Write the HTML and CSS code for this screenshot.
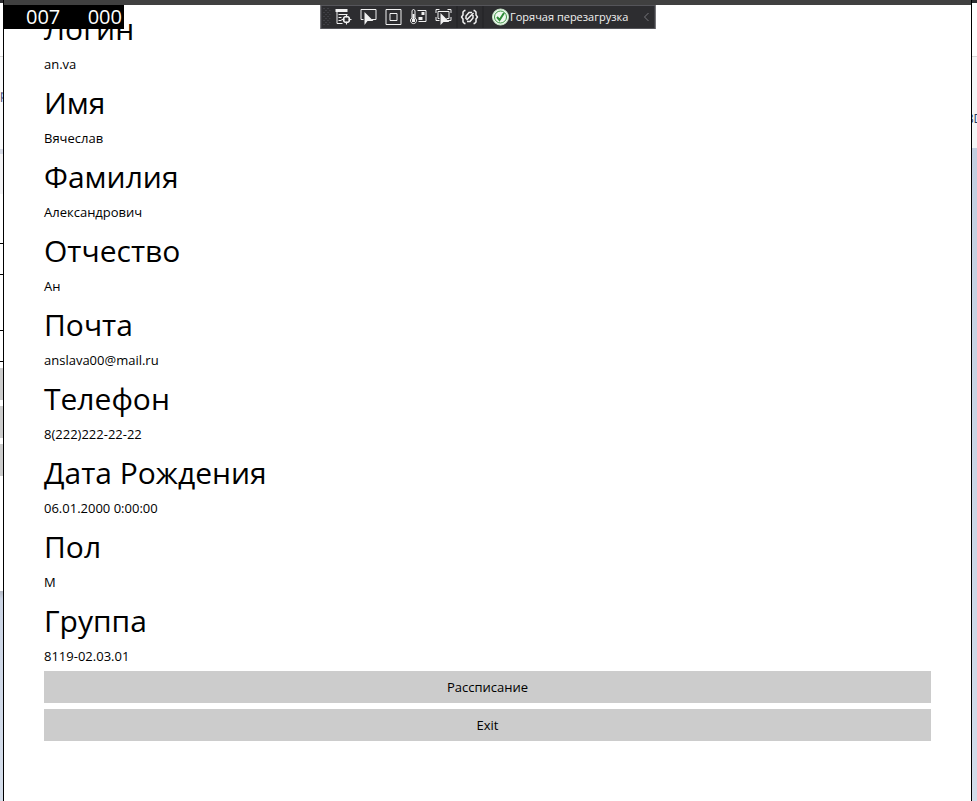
FILE: index.html
```html
<!DOCTYPE html>
<html lang="ru">
<head>
<meta charset="utf-8">
<title>Профиль</title>
<link rel="stylesheet" href="styles.css">
</head>
<body>
<div class="side left" aria-hidden="true">
  <div class="l-top"></div>
  <div class="l-tab"></div>
  <div class="l-label"><span>р</span></div>
  <div class="l-band"></div>
  <div class="l-shade"></div>
  <div class="l-gap"></div>
  <div class="l-field"></div>
  <div class="l-space"></div>
  <div class="l-field"></div>
  <div class="l-buttons"><i></i><i></i><i></i></div>
  <div class="l-desk"></div>
</div>
<div class="window">
  <div class="titlebar"></div>
  <div class="counter"><span>007</span><span>000</span></div>
  <div class="toolbar" role="toolbar">
    <svg class="grip" viewBox="0 0 8 20" fill="#55555a"><path d="M1 1h1v1H1zM5 1h1v1H5zM3 3h1v1H3zM7 3h1v1H7zM1 5h1v1H1zM5 5h1v1H5zM3 7h1v1H3zM7 7h1v1H7zM1 9h1v1H1zM5 9h1v1H5zM3 11h1v1H3zM7 11h1v1H7zM1 13h1v1H1zM5 13h1v1H5zM3 15h1v1H3zM7 15h1v1H7zM1 17h1v1H1zM5 17h1v1H5z"/></svg>
    <button class="tool" aria-label="Дерево"><svg viewBox="0 0 18 18"><path d="M2.500 3v12.500H8M4 6.500h9M4 9.500h3M4 12.500h3"/><path class="solid" d="M1 1h12v3H1z"/><circle cx="12" cy="11.500" r="3" stroke-width="1.500"/><path d="M12 6.500v3M12 13.500v3M7 11.500h3M14 11.500h3"/></svg></button>
    <button class="tool" aria-label="Выбор"><svg viewBox="0 0 18 18"><path d="M4 11.500H1.500v-10h15v10H12"/><path class="solid" d="M5 4v13l3-4h6z"/></svg></button>
    <button class="tool" aria-label="Границы"><svg viewBox="0 0 18 18"><path d="M1.500 1.500h15v15h-15zM5.500 5.500h7v7h-7z"/></svg></button>
    <button class="tool" aria-label="Диагностика"><svg viewBox="0 0 18 18"><path d="M2.500 10V2.500q1.500-2 3 0V10a3 3 0 1 1-3 0zM8 2.500h8.500v11H9"/><path class="solid" d="M3 6h2v5H3zM2.500 11h3v3h-3zM12 4h3v3h-3zM9 9h4v3H9z"/></svg></button>
    <button class="tool" aria-label="Фокус"><svg viewBox="0 0 18 18"><path d="M1.500 5V1.500H5M13 1.500h3.500V5M1.500 9v3.500H5M13 12.500h3.500V9M5 10.500H3.500v-7h11v7H12"/><path class="solid" d="M6 5v12l3-3h6z"/></svg></button>
    <i class="rule"></i>
    <button class="tool" aria-label="Привязки"><svg viewBox="0 0 18 18"><path stroke-width="1.500" d="M5 2.500H4L2.500 4v3L1 9l1.500 2v3L4 15.500h1M13 2.500h1L15.500 4v3L17 9l-1.500 2v3L14 15.500h-1M5.500 11V8l3-3.500h3M12.500 7v3l-3 3.500h-3M6 12l7-7"/></svg></button>
    <i class="rule"></i>
    <button class="reload"><svg viewBox="0 0 18 18"><circle cx="9" cy="9" r="8" fill="#eef8ee" stroke="#c4e3c4"/><circle cx="9" cy="9" r="6" fill="#eef8ee" stroke="#3f9645"/><path d="M5.500 9l2.500 3 4.500-7" fill="none" stroke="#2f8a37" stroke-width="2"/></svg>Горячая перезагрузка</button>
    <button class="collapse" aria-label="Свернуть"><svg viewBox="0 0 6 10"><path d="M5 1L1 5l4 4" fill="none" stroke="#77777b"/></svg></button>
  </div>
  <main class="profile">
    <h2>Логин</h2><p>an.va</p>
    <h2>Имя</h2><p>Вячеслав</p>
    <h2>Фамилия</h2><p>Александрович</p>
    <h2>Отчество</h2><p>Ан</p>
    <h2>Почта</h2><p>anslava00@mail.ru</p>
    <h2>Телефон</h2><p>8(222)222-22-22</p>
    <h2>Дата Рождения</h2><p>06.01.2000 0:00:00</p>
    <h2>Пол</h2><p>М</p>
    <h2>Группа</h2><p>8119-02.03.01</p>
    <button class="action">Рассписание</button>
    <button class="action">Exit</button>
  </main>
</div>
<div class="side right" aria-hidden="true">
  <div class="r-top"></div>
  <div class="r-white"></div>
  <div class="r-panel"><span>8D</span></div>
  <div class="r-desk"></div>
</div>
</body>
</html>
```
FILE: styles.css
```css
* { box-sizing: border-box; }
body {
  margin: 0;
  display: flex;
  min-height: 100vh;
  background: #fff;
  color: #000;
  font: 13px/19px "Open Sans", "Noto Sans", sans-serif;
}
button { margin: 0; padding: 0; border: 0; font: inherit; color: inherit; background: none; }
svg { display: block; }

.side { display: flex; flex-direction: column; flex: none; overflow: hidden; }
.left { width: 3px; }
.right { width: 5px; }
.l-top { height: 3px; background: #2d2d30; }
.l-tab { height: 54px; border-bottom: 1px solid #d8d8d8; }
.l-label { height: 92px; background: #fafbfc; padding-top: 28px; color: #3b4a78; font-size: 12px; display: flex; justify-content: flex-start; }
.l-band { height: 5px; background: #d5d9e4; }
.l-shade { height: 40px; background: #f3f3f5; }
.l-gap { height: 49px; }
.l-field { height: 32px; border-top: 1px solid #000; border-bottom: 1px solid #000; }
.l-space { height: 55px; }
.l-buttons { height: 229px; padding-top: 6px; }
.l-buttons i { display: block; height: 32px; margin-bottom: 6px; background: #ccc; }
.l-desk { flex: 1; background: linear-gradient(#b4b9c5, #ccd5e5 8px, #d5deeb); }
.r-top { height: 3px; background: #2d2d30; }
.r-white { height: 54px; border-bottom: 1px solid #d8d8d8; }
.r-panel { height: 91px; background: #f5f6f7; padding-top: 52px; color: #1f3a5f; font-size: 12px; display: flex; justify-content: center; }
.r-desk { flex: 1; background: linear-gradient(#c3cee0, #d3dcea); }

.window { position: relative; flex: 1; min-width: 0; border: solid #000; border-width: 0 1px; }
.titlebar { height: 5px; background: #404040; }
.counter {
  position: absolute; top: 5px; left: 0;
  display: flex; justify-content: space-between;
  width: 120px; height: 24px; padding: 0 2px 0 22px;
  background: #000; color: #fff; font-size: 20px; line-height: 23px;
}
.toolbar {
  position: absolute; top: 5px; left: 50%; transform: translateX(-50%);
  display: flex; align-items: center;
  width: 335px; height: 24px;
  background: #2d2d30; border: 1px solid #55555a; color: #f1f1f1;
}
.grip { width: 8px; height: 20px; margin: 0 1px; }
.tool { width: 25px; display: flex; justify-content: center; }
.tool svg { width: 18px; height: 18px; fill: none; stroke: #f1f1f1; }
.tool .solid { fill: #f1f1f1; stroke: none; }
.rule { width: 1px; height: 22px; background: #222225; }
.reload { display: flex; align-items: center; gap: 1px; margin-left: 8px; font-size: 11px; line-height: 18px; white-space: nowrap; }
.reload svg { width: 18px; height: 18px; }
.collapse { margin-left: auto; margin-right: 5px; }
.collapse svg { width: 6px; height: 10px; }

.profile { display: flex; flex-direction: column; gap: 6px; padding: 0 40px 40px; }
h2 { margin: 0; padding-top: 4px; font-size: 30px; font-weight: 400; line-height: 39px; }
p { margin: 0; padding-top: 2px; line-height: 17px; }
.action { height: 32px; background: #ccc; }
```
